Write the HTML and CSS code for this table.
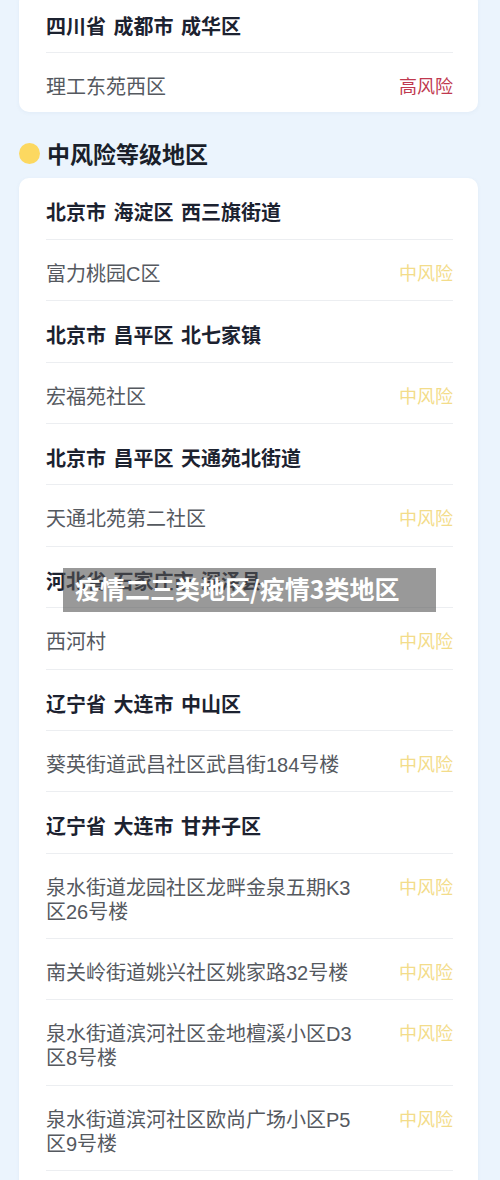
FILE: index.html
```html
<!DOCTYPE html>
<html lang="zh-CN">
<head>
    <meta charset="UTF-8">
    <meta name="viewport" content="width=device-width, initial-scale=1.0">
    <title>风险等级地区</title>
    <link rel="stylesheet" href="styles.css">
</head>
<body>

<div class="page">
    <div class="card card-top">
        <div class="row"><span class="area">四川省 成都市 成华区</span></div>
        <div class="row">
            <span class="place">理工东苑西区</span>
            <span class="risk high">高风险</span>
        </div>
    </div>

    <h2 class="section-title"><span class="dot"></span>中风险等级地区</h2>

    <div class="card card-list">
        <div class="row"><span class="area">北京市 海淀区 西三旗街道</span></div>
        <div class="row">
            <span class="place">富力桃园C区</span>
            <span class="risk mid">中风险</span>
        </div>
        <div class="row"><span class="area">北京市 昌平区 北七家镇</span></div>
        <div class="row">
            <span class="place">宏福苑社区</span>
            <span class="risk mid">中风险</span>
        </div>
        <div class="row"><span class="area">北京市 昌平区 天通苑北街道</span></div>
        <div class="row">
            <span class="place">天通北苑第二社区</span>
            <span class="risk mid">中风险</span>
        </div>
        <div class="row"><span class="area">河北省 石家庄市 深泽县</span></div>
        <div class="row">
            <span class="place">西河村</span>
            <span class="risk mid">中风险</span>
        </div>
        <div class="row"><span class="area">辽宁省 大连市 中山区</span></div>
        <div class="row">
            <span class="place">葵英街道武昌社区武昌街184号楼</span>
            <span class="risk mid">中风险</span>
        </div>
        <div class="row"><span class="area">辽宁省 大连市 甘井子区</span></div>
        <div class="row">
            <span class="place">泉水街道龙园社区龙畔金泉五期K3区26号楼</span>
            <span class="risk mid">中风险</span>
        </div>
        <div class="row">
            <span class="place">南关岭街道姚兴社区姚家路32号楼</span>
            <span class="risk mid">中风险</span>
        </div>
        <div class="row">
            <span class="place">泉水街道滨河社区金地檀溪小区D3区8号楼</span>
            <span class="risk mid">中风险</span>
        </div>
        <div class="row">
            <span class="place">泉水街道滨河社区欧尚广场小区P5区9号楼</span>
            <span class="risk mid">中风险</span>
        </div>
    </div>
</div>

<div class="watermark">疫情二三类地区/疫情3类地区</div>

</body>
</html>
```

FILE: styles.css
```css
body {
    margin: 0;
    background-color: #ebf4fd;
    font-family: "Noto Sans CJK SC", "Noto Sans", sans-serif;
    overflow: hidden;
}
.page {
    margin-top: -8px;
    padding: 0 22px 0 19px;
}
.card {
    background-color: white;
    border-radius: 10px;
    padding: 0 25px 0 27px;
    box-shadow: 0 1px 4px rgba(60, 100, 150, 0.06);
}
.card-top .row:last-child {
    border-bottom: none;
    padding-bottom: 13px;
}
.card-list {
    padding-bottom: 40px;
}
.row {
    display: flex;
    justify-content: space-between;
    align-items: flex-start;
    padding: 22px 0 14.4px;
    border-bottom: 1px solid #eceef1;
    font-size: 20px;
    line-height: 24px;
}
.area {
    font-weight: 700;
    color: #1c2230;
    word-spacing: 3px;
}
.place {
    font-family: "Liberation Sans", "Noto Sans CJK SC", sans-serif;
    color: #55595f;
    max-width: 322px;
}
.risk {
    flex-shrink: 0;
    font-size: 18px;
    line-height: 21px;
}
.risk.high {
    color: #c0394f;
}
.risk.mid {
    color: #f3dc8a;
}
.section-title {
    display: flex;
    align-items: center;
    margin: 0;
    padding: 26px 0 10px;
    font-size: 23px;
    line-height: 30px;
    font-weight: 700;
    color: #1a1f2b;
}
.dot {
    width: 21px;
    height: 21px;
    border-radius: 50%;
    background-color: #fcd860;
    margin-right: 7px;
}
.watermark {
    position: absolute;
    top: 568px;
    left: 63px;
    width: 361px;
    height: 44px;
    padding-left: 12px;
    background-color: rgba(85, 85, 85, 0.6);
    color: white;
    font-size: 25px;
    font-weight: 700;
    line-height: 40px;
    white-space: nowrap;
}
```
